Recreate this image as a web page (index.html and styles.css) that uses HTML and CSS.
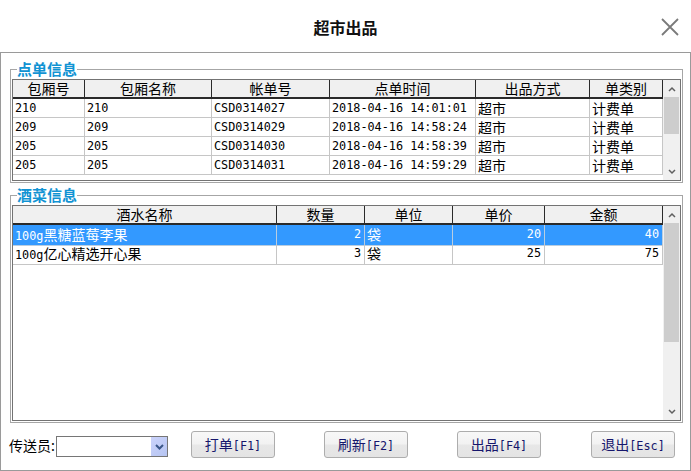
FILE: index.html
```html
<!DOCTYPE html>
<html lang="zh-CN">
<head>
<meta charset="utf-8">
<title>超市出品</title>
<link rel="stylesheet" href="styles.css">
</head>
<body>
<div class="window">
  <header class="titlebar">
    <h1 class="title">超市出品</h1>
    <svg class="close" width="18" height="18" viewBox="0 0 18 18"><path d="M1 1 L17 17 M17 1 L1 17" stroke="#7a7a7a" stroke-width="1.8" fill="none"/></svg>
  </header>
  <main class="panel">
    <fieldset class="group">
      <legend>点单信息</legend>
      <div class="grid orders">
        <div class="grid-body">
          <div class="row head"><span class="cell">包厢号</span><span class="cell">包厢名称</span><span class="cell">帐单号</span><span class="cell">点单时间</span><span class="cell">出品方式</span><span class="cell">单类别</span></div>
          <div class="row"><span class="cell m">210</span><span class="cell m">210</span><span class="cell m">CSD0314027</span><span class="cell m">2018-04-16 14:01:01</span><span class="cell">超市</span><span class="cell">计费单</span></div>
          <div class="row"><span class="cell m">209</span><span class="cell m">209</span><span class="cell m">CSD0314029</span><span class="cell m">2018-04-16 14:58:24</span><span class="cell">超市</span><span class="cell">计费单</span></div>
          <div class="row"><span class="cell m">205</span><span class="cell m">205</span><span class="cell m">CSD0314030</span><span class="cell m">2018-04-16 14:58:39</span><span class="cell">超市</span><span class="cell">计费单</span></div>
          <div class="row"><span class="cell m">205</span><span class="cell m">205</span><span class="cell m">CSD0314031</span><span class="cell m">2018-04-16 14:59:29</span><span class="cell">超市</span><span class="cell">计费单</span></div>
        </div>
        <div class="vscroll">
          <div class="sb-btn"><svg width="8" height="6" viewBox="0 0 8 6"><polyline points="1,5 4,2 7,5" fill="none" stroke="#606060" stroke-width="1.5"/></svg></div>
          <div class="sb-thumb thumb-orders"></div>
          <div class="sb-track"></div>
          <div class="sb-btn"><svg width="8" height="6" viewBox="0 0 8 6"><polyline points="1,1 4,4 7,1" fill="none" stroke="#606060" stroke-width="1.5"/></svg></div>
        </div>
      </div>
    </fieldset>
    <fieldset class="group group-items">
      <legend>酒菜信息</legend>
      <div class="grid items">
        <div class="grid-body">
          <div class="row head"><span class="cell">酒水名称</span><span class="cell">数量</span><span class="cell">单位</span><span class="cell">单价</span><span class="cell">金额</span></div>
          <div class="row selected"><span class="cell"><span class="m">100g</span>黑糖蓝莓李果</span><span class="cell m num">2</span><span class="cell">袋</span><span class="cell m num">20</span><span class="cell m num">40</span></div>
          <div class="row"><span class="cell"><span class="m">100g</span>亿心精选开心果</span><span class="cell m num">3</span><span class="cell">袋</span><span class="cell m num">25</span><span class="cell m num">75</span></div>
        </div>
        <div class="vscroll">
          <div class="sb-btn"><svg width="8" height="6" viewBox="0 0 8 6"><polyline points="1,5 4,2 7,5" fill="none" stroke="#606060" stroke-width="1.5"/></svg></div>
          <div class="sb-thumb thumb-items"></div>
          <div class="sb-track"></div>
          <div class="sb-btn"><svg width="8" height="6" viewBox="0 0 8 6"><polyline points="1,1 4,4 7,1" fill="none" stroke="#606060" stroke-width="1.5"/></svg></div>
        </div>
      </div>
    </fieldset>
    <footer class="footer">
      <label class="label">传送员:</label>
      <div class="combo">
        <div class="combo-btn"><svg width="9" height="6" viewBox="0 0 9 6"><polyline points="1,1 4.5,4.5 8,1" fill="none" stroke="#3a5688" stroke-width="2"/></svg></div>
      </div>
      <button class="btn btn-first">打单<span class="m">[F1]</span></button>
      <button class="btn">刷新<span class="m">[F2]</span></button>
      <button class="btn">出品<span class="m">[F4]</span></button>
      <button class="btn btn-last">退出<span class="m">[Esc]</span></button>
    </footer>
  </main>
</div>
</body>
</html>
```

FILE: styles.css
```css
html, body {
  margin: 0;
  padding: 0;
}
body {
  width: 691px;
  height: 471px;
  overflow: hidden;
  background: #fff;
  font-family: "Noto Sans CJK SC", sans-serif;
  font-size: 14px;
  color: #000;
}
.window {
  width: 691px;
  height: 471px;
  display: flex;
  flex-direction: column;
}
.titlebar {
  height: 52px;
  flex: none;
  display: grid;
  grid-template-columns: 1fr auto 1fr;
  align-items: center;
  padding-top: 2px;
  box-sizing: border-box;
}
.title {
  grid-column: 2;
  margin: 0;
  font-size: 16px;
  font-weight: bold;
  line-height: 22px;
  color: #111;
}
.close {
  grid-column: 3;
  justify-self: end;
  margin-right: 12px;
}
.panel {
  height: 419px;
  box-sizing: border-box;
  border: 1px solid #9a9a9a;
  display: flex;
  flex-direction: column;
}
.group {
  margin: 8px 7px 0 9px;
  padding: 2px 1px 1px 1px;
  border: 1px solid #a6a6a6;
  min-width: 0;
}
.group-items {
  margin-top: 4px;
}
.group legend {
  margin-left: 5px;
  padding: 0;
  font-size: 15px;
  line-height: 16px;
  font-weight: bold;
  color: #1193d3;
}
.grid {
  display: flex;
  box-sizing: border-box;
  border: 1px solid #737373;
  background: #fff;
}
.grid.orders { height: 102px; }
.grid.items { height: 216px; }
.grid-body {
  width: 650px;
}
.row {
  display: grid;
  height: 19px;
}
.orders .row { grid-template-columns: 72px 127px 118px 146px 114px 73px; }
.items .row { grid-template-columns: 264px 88px 88px 92px 118px; }
.cell {
  box-sizing: border-box;
  border-right: 1px solid #c6c6c6;
  border-bottom: 1px solid #c6c6c6;
  padding: 0 2px;
  line-height: 18px;
  white-space: nowrap;
}
.head .cell {
  background: #f0f0f0;
  border-right-color: #2a2a2a;
  border-bottom: 2px solid #2a2a2a;
  text-align: center;
  line-height: 17px;
}
.selected .cell {
  background: #3399ff;
  color: #fff;
  border-right-color: #b9cde0;
  border-bottom-color: #b9cde0;
}
.num {
  text-align: right;
  padding-right: 3px;
}
.m {
  font-family: "DejaVu Sans Mono", monospace;
  font-size: 11.8px;
}
.vscroll {
  width: 17px;
  display: flex;
  flex-direction: column;
  background: #f0f0f0;
}
.sb-btn {
  height: 17px;
  flex: none;
  display: flex;
  align-items: center;
  justify-content: center;
}
.sb-thumb {
  margin: 0 1px;
  background: #cdcdcd;
  flex: none;
}
.thumb-orders { height: 37px; }
.thumb-items { height: 119px; }
.sb-track { flex: 1; }
.footer {
  flex: 1;
  display: flex;
  align-items: center;
  padding: 0 0 4px 8px;
}
.label {
  width: 47px;
  font-size: 14px;
  line-height: 20px;
}
.combo {
  width: 112px;
  height: 21px;
  box-sizing: border-box;
  border: 1px solid #767676;
  background: #fff;
  display: flex;
  justify-content: flex-end;
  margin-top: 4px;
}
.combo-btn {
  width: 16px;
  height: 19px;
  background: linear-gradient(135deg, #cbd3fb, #b6c5f2);
  display: flex;
  align-items: center;
  justify-content: center;
}
.btn {
  width: 84px;
  height: 27px;
  box-sizing: border-box;
  margin: 0 0 0 49px;
  padding: 0;
  border: 1px solid #adadad;
  border-radius: 3px;
  background: linear-gradient(#f8f8f8, #f2f2f2 48%, #e7e7e7 52%, #e4e4e4);
  color: #16166c;
  font-family: "Noto Sans CJK SC", sans-serif;
  font-size: 14px;
  line-height: 20px;
}
.btn-first { margin-left: 23px; }
.btn-last { margin-left: 50px; }
```
